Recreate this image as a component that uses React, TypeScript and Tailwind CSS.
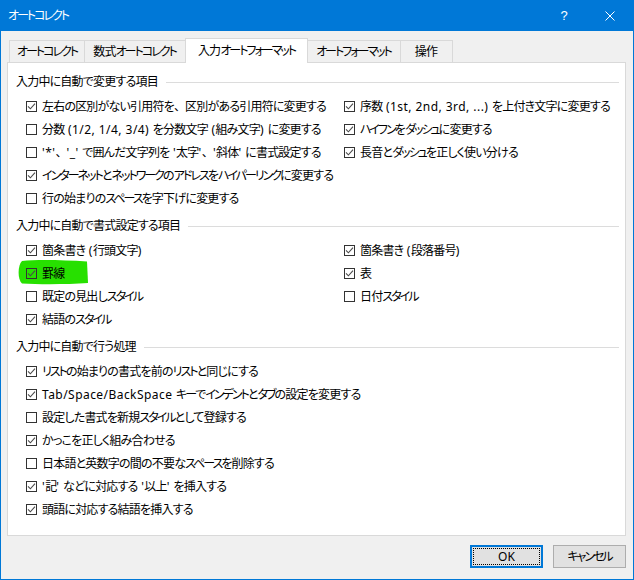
import React from "react";

type Item = { c: boolean; t: string; hl?: boolean };

const KATA = /[\u30A0-\u30FF\u31F0-\u31FF\uFF66-\uFF9F]/;
const PUNCT = /[、。]/;
const CJK = /[\u3000-\u30FF\u3400-\u9FFF\uFF00-\uFF65]/;

function cls(ch: string): number {
  if (PUNCT.test(ch)) return 3;
  if (KATA.test(ch)) return 2;
  if (CJK.test(ch)) return 1;
  return 0;
}

const T = ({ s }: { s: string }) => {
  const runs: { k: number; t: string }[] = [];
  for (const ch of Array.from(s)) {
    const k = cls(ch);
    const last = runs[runs.length - 1];
    if (last && last.k === k) last.t += ch;
    else runs.push({ k, t: ch });
  }
  return (
    <>
      {runs.map((r, i) =>
        r.k === 3 ? (
          <span key={i} className="tracking-[-0.8px] [font-feature-settings:normal]">{r.t}</span>
        ) : r.k === 2 ? (
          <span key={i} className="tracking-[-2px]">{r.t}</span>
        ) : r.k === 1 ? (
          <span key={i} className="tracking-[-0.8px]">{r.t}</span>
        ) : (
          <span key={i} className="tracking-[0.45px]">{r.t}</span>
        )
      )}
    </>
  );
};

const Check = ({ checked }: { checked: boolean }) => (
  <span className="relative w-[11px] h-[11px] border border-[#333333] flex items-center justify-center shrink-0">
    {checked && (
      <svg width="9" height="9" viewBox="0 0 9 9" className="block">
        <path d="M1 4.3 L3.4 6.8 L8 1.6" stroke="#4a4a4a" strokeWidth="1.1" fill="none" />
      </svg>
    )}
  </span>
);

const Row = ({ item }: { item: Item }) => (
  <div className="relative h-[23px] flex items-center gap-[5px] whitespace-nowrap">
    {item.hl && (
      <svg
        className="absolute left-[-9px] top-[-3px]"
        width="72"
        height="26"
        viewBox="0 0 72 26"
      >
        <path
          d="M5 2 C20 0.5 45 1 70 2.5 L71 24 C50 25.5 22 25.5 5 24.5 C0.5 21 0.5 6 5 2 Z"
          fill="#27e000"
        />
      </svg>
    )}
    <Check checked={item.c} />
    <span className="relative">
      <T s={item.t} />
    </span>
  </div>
);

const Header = ({ title, first }: { title: string; first?: boolean }) => (
  <div className={`flex items-center h-[20px] mb-[3px] ${first ? "" : "mt-[6px]"}`}>
    <span className="whitespace-nowrap">
      <T s={title} />
    </span>
    <div className="flex-1 h-px bg-[#dcdcdc] ml-[8px]" />
  </div>
);

const Col = ({ items }: { items: Item[] }) => (
  <div className="flex flex-col">
    {items.map((it, i) => (
      <Row key={i} item={it} />
    ))}
  </div>
);

const s1L: Item[] = [
  { c: true, t: "左右の区別がない引用符を、区別がある引用符に変更する" },
  { c: false, t: "分数 (1/2, 1/4, 3/4) を分数文字 (組み文字) に変更する" },
  { c: false, t: "'*'、'_' で囲んだ文字列を '太字'、'斜体' に書式設定する" },
  { c: true, t: "インターネットとネットワークのアドレスをハイパーリンクに変更する" },
  { c: false, t: "行の始まりのスペースを字下げに変更する" },
];
const s1R: Item[] = [
  { c: true, t: "序数 (1st, 2nd, 3rd, ...) を上付き文字に変更する" },
  { c: true, t: "ハイフンをダッシュに変更する" },
  { c: true, t: "長音とダッシュを正しく使い分ける" },
];
const s2L: Item[] = [
  { c: true, t: "箇条書き (行頭文字)" },
  { c: true, t: "罫線", hl: true },
  { c: false, t: "既定の見出しスタイル" },
  { c: true, t: "結語のスタイル" },
];
const s2R: Item[] = [
  { c: true, t: "箇条書き (段落番号)" },
  { c: true, t: "表" },
  { c: false, t: "日付スタイル" },
];
const s3: Item[] = [
  { c: true, t: "リストの始まりの書式を前のリストと同じにする" },
  { c: true, t: "Tab/Space/BackSpace キーでインデントとタブの設定を変更する" },
  { c: false, t: "設定した書式を新規スタイルとして登録する" },
  { c: true, t: "かっこを正しく組み合わせる" },
  { c: false, t: "日本語と英数字の間の不要なスペースを削除する" },
  { c: true, t: "'記' などに対応する '以上' を挿入する" },
  { c: true, t: "頭語に対応する結語を挿入する" },
];

const Tab = ({ label, w, first }: { label: string; w: string; first?: boolean }) => (
  <div
    className={`${w} ${first ? "border-l" : "-ml-px"} h-[22px] border-t border-r border-[#d9d9d9] flex items-center justify-center whitespace-nowrap`}
  >
    <T s={label} />
  </div>
);

export default function App() {
  return (
    <div className="w-[634px] h-[580px] bg-[#f0f0f0] flex flex-col text-[12px] text-black [font-family:'Noto_Sans','Noto_Sans_CJK_JP',sans-serif] [font-feature-settings:'palt'] overflow-hidden">
      {/* Title bar */}
      <div className="h-[31px] bg-[#0078d7] flex items-center shrink-0 text-white">
        <span className="ml-[8px] flex-1 whitespace-nowrap">
          <T s="オートコレクト" />
        </span>
        <span className="w-[46px] text-center text-[13px] [font-family:'Liberation_Sans',sans-serif]">?</span>
        <span className="w-[46px] flex items-center justify-center mr-[1px]">
          <svg width="10" height="10" viewBox="0 0 10 10">
            <path d="M0.5 0.5 L9.5 9.5 M9.5 0.5 L0.5 9.5" stroke="#ffffff" strokeWidth="1" />
          </svg>
        </span>
      </div>

      {/* Body */}
      <div className="flex-1 flex flex-col border-x border-b border-[#0078d7] pl-[6px]">
        {/* Tabs */}
        <div className="mt-[7px] h-[24px] flex items-end pl-[2px]">
          <Tab label="オートコレクト" w="w-[76px]" first />
          <Tab label="数式オートコレクト" w="w-[102px]" />
          <div className="relative z-10 w-[123px] -ml-px h-[25px] -mb-px bg-white border-t border-l border-r border-[#d9d9d9] flex items-start pt-[3px] justify-center whitespace-nowrap">
            <T s="入力オートフォーマット" />
          </div>
          <Tab label="オートフォーマット" w="w-[94px]" />
          <Tab label="操作" w="w-[53px]" />
        </div>

        {/* Panel */}
        <div className="w-[619px] h-[474px] bg-white border border-[#d9d9d9] pt-[9px] pl-[8px] pr-[6px]">
          <Header title="入力中に自動で変更する項目" first />
          <div className="grid grid-cols-[318px_1fr] pl-[10px]">
            <Col items={s1L} />
            <Col items={s1R} />
          </div>

          <Header title="入力中に自動で書式設定する項目" />
          <div className="grid grid-cols-[318px_1fr] pl-[10px]">
            <Col items={s2L} />
            <Col items={s2R} />
          </div>

          <Header title="入力中に自動で行う処理" />
          <div className="pl-[10px]">
            <Col items={s3} />
          </div>
        </div>

        {/* Buttons */}
        <div className="w-[619px] flex justify-end gap-[10px] mt-[9px]">
          <div className="w-[73px] h-[23px] bg-[#e1e1e1] border-2 border-[#0078d7] p-px">
            <div className="w-full h-full border border-dotted border-black flex items-center justify-center">
              OK
            </div>
          </div>
          <div className="w-[73px] h-[23px] bg-[#e1e1e1] border border-[#adadad] flex items-center justify-center whitespace-nowrap">
            <T s="キャンセル" />
          </div>
        </div>
      </div>
    </div>
  );
}
